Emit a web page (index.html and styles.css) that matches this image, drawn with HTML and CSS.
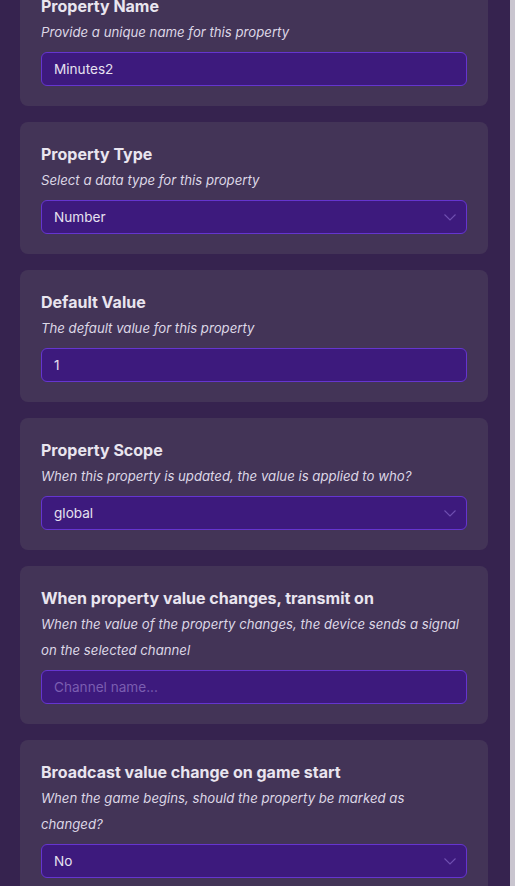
FILE: index.html
```html
<!DOCTYPE html>
<html>
<head>
<meta charset="utf-8">
<link rel="stylesheet" href="styles.css">
</head>
<body>
<div class="page">
  <main class="list">
    <section class="card">
      <h2 class="title">Property Name</h2>
      <p class="desc">Provide a unique name for this property</p>
      <div class="field"><span class="value">Minutes2</span></div>
    </section>
    <section class="card">
      <h2 class="title">Property Type</h2>
      <p class="desc">Select a data type for this property</p>
      <div class="field select"><span class="value">Number</span>
        <svg class="chev" width="12" height="7" viewBox="0 0 12 7"><path d="M0.5 0.5 L6 6 L11.5 0.5" fill="none" stroke="currentColor" stroke-width="1.1"/></svg>
      </div>
    </section>
    <section class="card">
      <h2 class="title">Default Value</h2>
      <p class="desc">The default value for this property</p>
      <div class="field"><span class="value">1</span></div>
    </section>
    <section class="card">
      <h2 class="title">Property Scope</h2>
      <p class="desc">When this property is updated, the value is applied to who?</p>
      <div class="field select"><span class="value">global</span>
        <svg class="chev" width="12" height="7" viewBox="0 0 12 7"><path d="M0.5 0.5 L6 6 L11.5 0.5" fill="none" stroke="currentColor" stroke-width="1.1"/></svg>
      </div>
    </section>
    <section class="card">
      <h2 class="title">When property value changes, transmit on</h2>
      <p class="desc">When the value of the property changes, the device sends a signal on the selected channel</p>
      <div class="field"><span class="placeholder">Channel name...</span></div>
    </section>
    <section class="card">
      <h2 class="title">Broadcast value change on game start</h2>
      <p class="desc">When the game begins, should the property be marked as changed?</p>
      <div class="field select"><span class="value">No</span>
        <svg class="chev" width="12" height="7" viewBox="0 0 12 7"><path d="M0.5 0.5 L6 6 L11.5 0.5" fill="none" stroke="currentColor" stroke-width="1.1"/></svg>
      </div>
    </section>
  </main>
  <div class="scrollbar"></div>
</div>
</body>
</html>
```
FILE: styles.css
```css
* { box-sizing: border-box; }
html, body {
  margin: 0;
  padding: 0;
  height: 100%;
  overflow: hidden;
}
body {
  background: #36234f;
  font-family: Inter, "Noto Sans", "Liberation Sans", sans-serif;
}
.page {
  display: flex;
  height: 886px;
  overflow: hidden;
}
.list {
  flex: 1;
  display: flex;
  flex-direction: column;
  gap: 16px;
  padding: 0 22px 0 20px;
  margin-top: -26px;
}
.scrollbar {
  width: 5px;
  flex: none;
  background: #c9c5cf;
}
.card {
  background: #433457;
  border-radius: 8px;
  padding: 20px 21px 20px;
}
.title {
  margin: 0;
  font-size: 16px;
  line-height: 25px;
  font-weight: 700;
  color: #e9e5ef;
}
.desc {
  margin: 0 0 7px;
  font-size: 13.2px;
  line-height: 26px;
  font-style: italic;
  color: #ddd7e6;
}
.field {
  height: 34px;
  border: 1px solid #6535cf;
  border-radius: 6px;
  background: #3d1a7d;
  display: flex;
  align-items: center;
  justify-content: space-between;
  padding: 0 10px 0 12px;
  font-size: 13.6px;
}
.value { color: #e6e1f0; }
.placeholder { color: #7b5eb1; }
.chev { color: #6f50b0; }
```
